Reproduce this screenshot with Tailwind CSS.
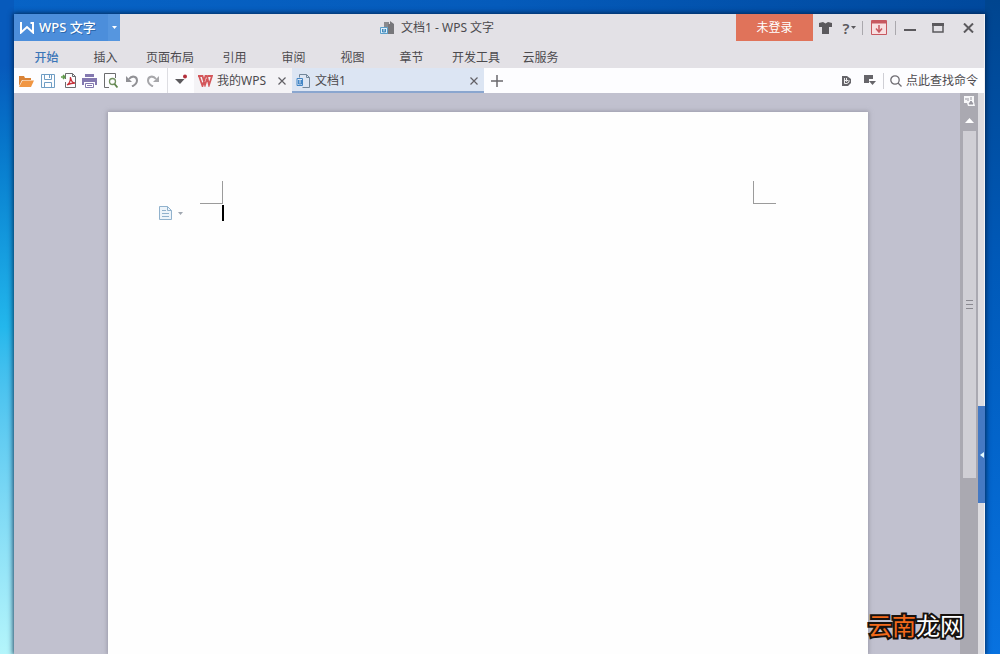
<!DOCTYPE html>
<html lang="zh-CN">
<head>
<meta charset="utf-8">
<meta name="viewport" content="width=device-width, initial-scale=1">
<title>文档1 - WPS 文字</title>
<script src="https://cdn.jsdelivr.net/npm/@tailwindcss/browser@4"></script>
</head>
<body class="relative flex h-screen overflow-hidden bg-linear-to-r from-[#0763c6] via-[#055bbb] to-[#00489c] pl-3.5 pr-[15px] pt-3.5 font-['Noto_Sans','Noto_Sans_CJK_SC',sans-serif] text-xs text-[#4c4a4e]">
<div class="absolute inset-y-0 left-0 w-3.5 bg-linear-to-b from-[#075abc] from-10% via-[#23b7ec] via-50% to-[#b4f5fb]"></div>
<div class="absolute inset-y-0 right-0 w-[15px] bg-linear-to-b from-[#00458f] via-[#0059b8] via-40% to-[#0872e0]"></div>

<div class="relative flex min-w-0 flex-1 flex-col border-r border-[#f2f2f6] bg-[#e3e1e6] shadow-[0_0_5px_1px_#001c3dcc]">
  <!-- title bar -->
  <header class="relative flex h-[27px] shrink-0 items-center justify-between">
    <button class="flex h-full w-[106px] items-center bg-[#4c8edb] pl-1.5 text-white">
      <svg width="15" height="13" viewBox="0 0 15 13" fill="none" stroke="currentColor" stroke-width="2"><path d="M1 1v10.500l6-5.500 6 5.500V1M10.500 2H14"/></svg>
      <span class="ml-1 flex-1 text-left text-[13px] font-medium [text-shadow:1px_1px_0_#2c68ab]">WPS 文字</span>
      <span class="flex h-full w-3 items-center justify-center bg-[#5696df]"><svg width="5" height="3" viewBox="0 0 5 3"><path d="M0 0h5L2.500 3z" fill="currentColor"/></svg></span>
    </button>
    <div class="flex flex-1 items-center gap-1.5 pl-[260px]">
      <svg width="15" height="14" viewBox="0 0 15 14"><path d="M4 1h5v12H4z" fill="#8a8a8e"/><path d="M8 3h6v10H8z" fill="#77777b"/><path d="M10 0l4 3h-4z" fill="#77777b"/><path d="M.5 6.500h7v6h-7z" fill="#dfeffb" stroke="#5a9fcb"/><path d="M2.500 8v3h3V8M4 8v3" fill="none" stroke="#3f87bb"/></svg>
      <h1 class="whitespace-nowrap">文档1 - WPS 文字</h1>
    </div>
    <div class="flex h-full items-center text-[#5b595d]">
      <button class="h-full w-[77px] bg-[#e0735a] text-white">未登录</button>
      <button aria-label="皮肤" class="grid h-full w-6 place-items-center"><svg width="13" height="12" viewBox="0 0 13 12"><path d="M0 1l4-1 2.500 1.500L9 0l4 1v4h-3v7H3V5H0z" fill="currentColor"/></svg></button>
      <button aria-label="帮助" class="flex h-full w-[25px] items-center justify-center gap-0.5 text-[15px] font-semibold">?<svg width="5" height="3" viewBox="0 0 5 3"><path d="M0 0h5L2.500 3z" fill="currentColor"/></svg></button>
      <span class="h-3.5 w-px bg-[#aaa8ad]"></span>
      <button aria-label="隐藏功能区" class="grid h-full w-8 place-items-center"><svg width="16" height="15" viewBox="0 0 16 15" fill="none" stroke="#c75860"><path d="M.5.5h15v14H.5z" fill="#f8dfe1"/><path d="M1 2h14" stroke-width="3"/><path d="M8 5v7M5 8.500l3 3.500 3-3.500" stroke-width="1.500"/></svg></button>
      <span class="h-3.5 w-px bg-[#aaa8ad]"></span>
      <button aria-label="最小化" class="grid h-full w-7 place-items-center"><svg width="12" height="10" viewBox="0 0 12 10"><path d="M0 6h12v2H0z" fill="currentColor"/></svg></button>
      <button aria-label="最大化" class="grid h-full w-7 place-items-center"><svg width="12" height="10" viewBox="0 0 12 10" fill="none" stroke="currentColor" stroke-width="1.500"><path d="M1 1h10v8H1z"/><path d="M0 1.500h12" stroke-width="3"/></svg></button>
      <button aria-label="关闭" class="grid h-full w-8 place-items-center"><svg width="11" height="10" viewBox="0 0 11 10" stroke="currentColor" stroke-width="2"><path d="M1 .5l9 9M10 .5l-9 9"/></svg></button>
    </div>
  </header>

  <!-- ribbon tabs -->
  <nav class="flex h-[27px] shrink-0 items-center pl-[3px] pt-1.5 whitespace-nowrap">
    <a href="#" class="min-w-[59px] px-[11px] text-center font-medium text-[#3c76b8]">开始</a>
    <a href="#" class="min-w-[59px] px-[11px] text-center">插入</a>
    <a href="#" class="min-w-[59px] px-[11px] text-center">页面布局</a>
    <a href="#" class="min-w-[59px] px-[11px] text-center">引用</a>
    <a href="#" class="min-w-[59px] px-[11px] text-center">审阅</a>
    <a href="#" class="min-w-[59px] px-[11px] text-center">视图</a>
    <a href="#" class="min-w-[59px] px-[11px] text-center">章节</a>
    <a href="#" class="min-w-[59px] px-[11px] text-center">开发工具</a>
    <a href="#" class="min-w-[59px] px-[11px] text-center">云服务</a>
  </nav>

  <!-- quick access bar and document tabs -->
  <div class="flex h-[25px] shrink-0 items-center bg-[#fdfdff] pl-0.5 whitespace-nowrap">
    <button aria-label="打开" class="grid h-full w-[21px] place-items-center"><svg width="15" height="12" viewBox="0 0 15 12"><path d="M0 11V1h5l1 2h6v2H3z" fill="#d98236"/><path d="M3.500 5.500H15L12 12H0z" fill="#f09643"/></svg></button>
    <button aria-label="保存" class="grid h-full w-[21px] place-items-center"><svg width="14" height="14" viewBox="0 0 14 14" fill="none" stroke="#6f9dc4"><path d="M.5.5h13v13H.5zM3.500.5v5h7v-5M3.500 13.500v-5h7v5M8.500 1v3"/></svg></button>
    <button aria-label="输出为PDF" class="grid h-full w-[21px] place-items-center"><svg width="16" height="15" viewBox="0 0 16 15" fill="none"><path d="M4.500 6V.5h7l3 3v11h-10V9M11.500.5v3h3" stroke="#6b6b6e"/><path d="M6 12c2-1 3.500-4 3.500-8 .5 4 2 6 4.500 6-3 0-5 .5-8 2" stroke="#c6323a" stroke-width="1.300"/><path d="M0 4h3M2 2l2 2-2 2" stroke="#5f9a4a" stroke-width="1.500"/></svg></button>
    <button aria-label="打印" class="grid h-full w-[21px] place-items-center"><svg width="15" height="14" viewBox="0 0 15 14"><path d="M3 0h9v3H3zM0 4h15v7h-2V8H2v3H0z" fill="#8378b0"/><path d="M3.500 9.500h8v4h-8z" fill="#fff" stroke="#8378b0"/><path d="M5 11.500h5" stroke="#8378b0"/></svg></button>
    <button aria-label="打印预览" class="grid h-full w-[21px] place-items-center"><svg width="14" height="15" viewBox="0 0 14 15" fill="none"><path d="M5 14.500H.5V.5h11V5" stroke="#6b6b6e"/><circle cx="8.500" cy="8.500" r="3" stroke="#719060" stroke-width="1.300"/><path d="M10.500 11l3 3.500" stroke="#5d8349" stroke-width="1.800"/></svg></button>
    <button aria-label="撤销" class="grid h-full w-[21px] place-items-center"><svg width="12" height="12" viewBox="0 0 12 12" fill="none"><path d="M3 4c3-4 8-2.500 8 1.500C11 8 9 10 6 11.500" stroke="#919196" stroke-width="2"/><path d="M0 1v6h6z" fill="#919196"/></svg></button>
    <button aria-label="恢复" class="grid h-full w-[21px] place-items-center"><svg width="12" height="12" viewBox="0 0 12 12" fill="none"><path d="M9 4C6 0 1 1.500 1 5.500 1 8 3 10 6 11.500" stroke="#a7a7ab" stroke-width="2"/><path d="M12 1v6H6z" fill="#a7a7ab"/></svg></button>
    <span class="ml-1 h-full w-px bg-[#dddde2]"></span>
    <button aria-label="更多" class="grid h-full w-[26px] place-items-center"><svg width="13" height="13" viewBox="0 0 13 13"><path d="M0 5h9.500L5 10z" fill="#5c5a5e"/><circle cx="10" cy="2.500" r="2" fill="#b3303c"/></svg></button>
    <div class="flex h-full w-[98px] items-center bg-[#f4f3f6] pl-1 pr-1.5">
      <svg width="15" height="12" viewBox="0 0 15 12" fill="none" stroke="#d4565a" stroke-width="1.800"><path d="M0 1h4.500l2.500 9L9 4M1 1l3.500 10L7.500 1H9l2 9L14 1h-4"/></svg>
      <a href="#" class="ml-1 flex-1">我的WPS</a>
      <button aria-label="关闭我的WPS"><svg width="8" height="8" viewBox="0 0 8 8" stroke="#626065" stroke-width="1.200"><path d="M.5.5l7 7M7.500.5l-7 7"/></svg></button>
    </div>
    <div class="flex h-full w-48 items-center bg-[#dce5f3] pl-1 pr-1.5 shadow-[inset_0_-2px_0_#8aa6cf]">
      <svg width="15" height="14" viewBox="0 0 15 14" fill="none"><path d="M3.500 3.500v-3h7l3 3v10h-7M10.500.5v3h3" stroke="#72869a"/><path d="M1 4.500h5.500v7H1zM2.500 6v4h3V6M4 6v4" stroke="#4386c6"/></svg>
      <a href="#" class="ml-1 flex-1">文档1</a>
      <button aria-label="关闭文档1"><svg width="8" height="8" viewBox="0 0 8 8" stroke="#626065" stroke-width="1.200"><path d="M.5.5l7 7M7.500.5l-7 7"/></svg></button>
    </div>
    <button aria-label="新建" class="grid h-full w-[25px] place-items-center"><svg width="12" height="12" viewBox="0 0 12 12" stroke="#6a686d" stroke-width="1.500"><path d="M6 0v12M0 6h12"/></svg></button>
    <div class="ml-auto flex h-full items-center">
      <button aria-label="文档" class="grid h-full w-6 place-items-center"><svg width="9" height="10" viewBox="0 0 9 10"><path d="M0 0h5l4 3v4l-3 3H0z" fill="#66656a"/><path d="M2.500 2v5.500H5L7 6V4M4.500 2v3M3 4l1.500 1.500L6 4" fill="none" stroke="#fff" stroke-width=".9"/></svg></button>
      <button aria-label="切换窗口" class="grid h-full w-6 place-items-center"><svg width="12" height="11" viewBox="0 0 12 11"><path d="M0 0h9v4H5v4H0z" fill="#66656a"/><path d="M5 6h7L8.500 10z" fill="#66656a"/></svg></button>
      <span class="ml-px mr-1.5 h-4 w-px bg-[#cfcfd5]"></span>
      <label for="find" aria-label="查找命令"><svg width="12" height="12" viewBox="0 0 12 12" fill="none" stroke="#6e6c72" stroke-width="1.300"><circle cx="5" cy="5" r="4.200"/><path d="M8 8l3.500 3.500"/></svg></label>
      <input id="find" type="text" placeholder="点此查找命令" class="ml-1 w-[78px] bg-transparent outline-none placeholder:text-[#4c4a4e]">
    </div>
  </div>

  <!-- document area -->
  <main class="flex min-h-0 flex-1 bg-[#c1c1cf]">
    <div class="flex min-w-0 flex-1 pl-[94px] pr-[92px] pt-[19px]">
      <article class="min-w-0 flex-1 bg-[#fefefe] pt-[69px] shadow-[0_0_4px_1px_#8a8898aa]">
        <div class="flex justify-between px-[92px]">
          <span class="h-[23px] w-[23px] border-b border-r border-[#9b9b9b]"></span>
          <span class="h-[23px] w-[23px] border-b border-l border-[#9b9b9b]"></span>
        </div>
        <div class="flex items-start pl-[51px] pt-px">
          <button aria-label="段落布局" class="flex h-4 w-[63px] items-center gap-1.5"><svg width="13" height="14" viewBox="0 0 13 14" fill="none" stroke="#91b2cd"><path d="M.5.5h8l4 4v9H.5z" fill="#edf4fa"/><path d="M8.500.5v4h4M3 4.500h4M3 7.500h7M3 10.500h7"/></svg><svg width="5" height="3" viewBox="0 0 5 3"><path d="M0 0h5L2.500 3z" fill="#a0a7b0"/></svg></button>
          <span class="h-4 w-0.5 bg-black"></span>
        </div>
      </article>
    </div>
    <aside class="flex w-[18px] flex-col items-center bg-[#aaa9b1]">
      <button aria-label="选择浏览对象" class="grid h-4 w-full shrink-0 place-items-center"><svg width="11" height="10" viewBox="0 0 11 10"><path d="M0 0h10v6l1 4H4L3 7H0z" fill="#f7f7f9"/><path d="M2 2v2M4 2v3M7 1v3M5 8l2-3 2 3z" stroke="#9897a0" fill="#9897a0"/></svg></button>
      <button aria-label="向上滚动" class="grid h-[22px] w-full shrink-0 place-items-center"><svg width="9" height="5" viewBox="0 0 9 5"><path d="M4.500 0L9 5H0z" fill="#fff"/></svg></button>
      <div class="flex h-[66%] w-[13px] max-h-[347px] flex-col items-center justify-center gap-[3px] bg-[#d0cfd5]"><span class="h-px w-[7px] bg-[#8a8990]"></span><span class="h-px w-[7px] bg-[#8a8990]"></span><span class="h-px w-[7px] bg-[#8a8990]"></span></div>
    </aside>
    <div class="flex w-1.5 flex-col bg-[#dddce0] pt-[313px]">
      <button aria-label="展开任务窗格" class="flex h-[97px] w-[7px] shrink-0 items-center justify-center bg-[#4579c3]"><svg width="4" height="6" viewBox="0 0 4 6"><path d="M4 0v6L0 3z" fill="#e4fbff"/></svg></button>
    </div>
  </main>
</div>

<!-- watermark -->
<p class="absolute bottom-3 right-9 text-2xl leading-8 text-white [paint-order:stroke_fill] [-webkit-text-stroke:4px_#17120f]"><span class="text-[#f26a1b]">云南</span>龙网</p>
</body>
</html>
